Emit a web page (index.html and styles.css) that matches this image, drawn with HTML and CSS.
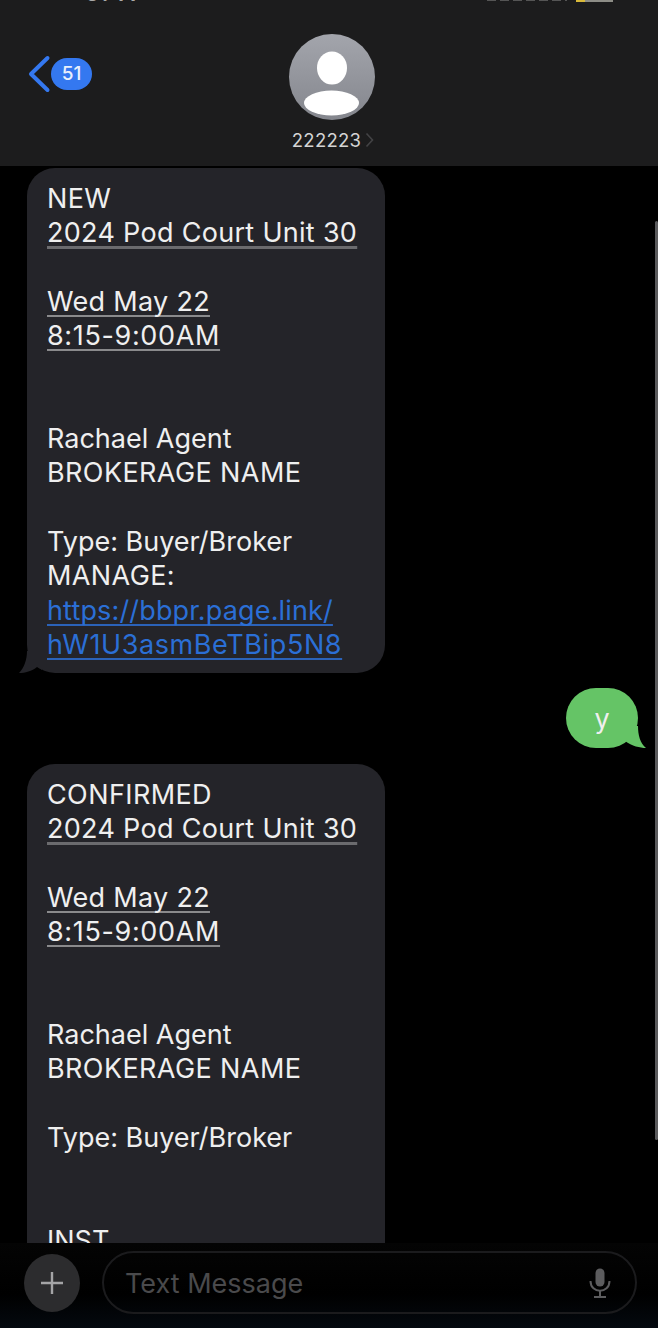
FILE: index.html
```html
<!DOCTYPE html>
<html lang="en">
<head>
<meta charset="utf-8">
<title>Messages</title>
<link rel="stylesheet" href="styles.css">
</head>
<body>
<div class="phone">
  <header class="top">
    <div class="status">
      <span class="time">9:41</span>
      <span class="signal"></span>
      <span class="battery"></span>
    </div>
    <div class="back">
      <svg class="chevron" width="24" height="38" viewBox="0 0 24 38"><path d="M20.5 3 L4 19 L20.5 35" fill="none" stroke="#3478f0" stroke-width="4" stroke-linecap="round" stroke-linejoin="round"/></svg>
      <span class="count">51</span>
    </div>
    <div class="contact">
      <svg class="avatar" width="86" height="86" viewBox="0 0 86 86">
        <defs><linearGradient id="av" x1="0" y1="0" x2="0" y2="1"><stop offset="0" stop-color="#a3a5ac"/><stop offset="1" stop-color="#84868d"/></linearGradient></defs>
        <circle cx="43" cy="43" r="43" fill="url(#av)"/>
        <ellipse cx="43" cy="34" rx="15" ry="16.5" fill="#fff"/>
        <ellipse cx="42.5" cy="69" rx="27.5" ry="12.5" fill="#fff"/>
      </svg>
      <div class="name">222223<svg class="more" width="9" height="16" viewBox="0 0 9 16"><path d="M1.5 1.5 L7.5 8 L1.5 14.5" fill="none" stroke="#434345" stroke-width="1.6"/></svg></div>
    </div>
  </header>
  <main class="thread">
    <div class="bubble in">
      <p class="line caps">NEW</p>
      <p class="line"><u class="mark thick">2024 Pod Court Unit 30</u></p>
      <p class="line">&nbsp;</p>
      <p class="line"><u class="mark">Wed May 22</u></p>
      <p class="line"><u class="mark hours">8:15-9:00AM</u></p>
      <p class="line">&nbsp;</p>
      <p class="line">&nbsp;</p>
      <p class="line">Rachael Agent</p>
      <p class="line caps">BROKERAGE NAME</p>
      <p class="line">&nbsp;</p>
      <p class="line">Type: Buyer/Broker</p>
      <p class="line caps">MANAGE:</p>
      <p class="line"><u class="link">https://bbpr.page.link/</u></p>
      <p class="line"><u class="link code">hW1U3asmBeTBip5N8</u></p>
      <svg class="tail tail-in" width="24" height="22" viewBox="0 0 24 22"><path d="M24 0 H9 C9 9 6 17 1 22 C7 22 14 20 19 16 L24 19 Z" fill="#242429"/></svg>
    </div>
    <div class="bubble out">y
      <svg class="tail tail-out" width="22" height="22" viewBox="0 0 22 22"><path d="M0 0 H14 C14 9 16 17 22 22 C16 22 8 20 1 15 L0 15 Z" fill="#65c466"/></svg>
    </div>
    <div class="bubble in cut">
      <p class="line caps">CONFIRMED</p>
      <p class="line"><u class="mark thick">2024 Pod Court Unit 30</u></p>
      <p class="line">&nbsp;</p>
      <p class="line"><u class="mark">Wed May 22</u></p>
      <p class="line"><u class="mark hours">8:15-9:00AM</u></p>
      <p class="line">&nbsp;</p>
      <p class="line">&nbsp;</p>
      <p class="line">Rachael Agent</p>
      <p class="line caps">BROKERAGE NAME</p>
      <p class="line">&nbsp;</p>
      <p class="line">Type: Buyer/Broker</p>
      <p class="line">&nbsp;</p>
      <p class="line">&nbsp;</p>
      <p class="line">INST</p>
    </div>
    <span class="scrollbar"></span>
  </main>
  <footer class="composer">
    <button class="plus"><svg width="24" height="24" viewBox="0 0 24 24"><path d="M12 1 V23 M1 12 H23" stroke="#a4a4a6" stroke-width="2.4" fill="none"/></svg></button>
    <div class="field">
      <span class="placeholder">Text Message</span>
      <svg class="mic" width="22" height="30" viewBox="0 0 22 30"><rect x="6.5" y="0.5" width="9" height="18" rx="4.5" fill="#5c5c5e"/><path d="M1.5 13 C1.5 26 20.5 26 20.5 13" fill="none" stroke="#5c5c5e" stroke-width="2"/><path d="M11 23 V28 M5 29 H17" stroke="#5c5c5e" stroke-width="2" fill="none"/></svg>
    </div>
  </footer>
</div>
</body>
</html>
```
FILE: styles.css
```css
* { box-sizing: border-box; }
html, body { margin: 0; padding: 0; background: #000; }
.phone {
  width: 658px;
  height: 1328px;
  display: flex;
  flex-direction: column;
  overflow: hidden;
  font-family: Inter, "Liberation Sans", sans-serif;
  color: #efefef;
}
.top {
  position: relative;
  height: 166px;
  flex: none;
  background: #1c1c1d;
}
.status { position: absolute; inset: 0 0 auto 0; height: 3px; overflow: hidden; }
.time { position: absolute; left: 85px; top: -17px; font-size: 24px; line-height: 20px; font-weight: 600; letter-spacing: 1px; color: #aaa; }
.signal { position: absolute; left: 487px; top: 0; width: 80px; height: 1px; background: repeating-linear-gradient(90deg, #555 0 9px, transparent 9px 13px); }
.battery { position: absolute; left: 576px; top: 0; width: 37px; height: 2px; background: linear-gradient(90deg, #d8b93a 0 9px, #8d8d86 9px); }
.back { position: absolute; left: 27px; top: 55px; display: flex; align-items: center; }
.count {
  width: 41px;
  height: 32px;
  border-radius: 16px;
  background: #3478f0;
  color: #e8effc;
  font-size: 19px;
  font-weight: 500;
  line-height: 32px;
  text-align: center;
}
.contact { position: absolute; left: 289px; top: 34px; width: 86px; display: flex; flex-direction: column; align-items: center; }
.avatar { display: block; }
.name { margin-top: 9px; font-size: 18.5px; letter-spacing: 0.25px; line-height: 22px; color: #d4d4d4; white-space: nowrap; display: flex; align-items: center; gap: 4px; padding-left: 2px; }
.thread { position: relative; flex: 1; min-height: 0; padding-top: 2px; overflow: hidden; }
.line { margin: 0; height: 34.3px; line-height: 34.3px; white-space: nowrap; }
.caps { letter-spacing: 0.4px; }
.bubble {
  position: relative;
  font-size: 27px;
  border-radius: 28px;
  background: #242429;
}
.bubble.in { margin-left: 27px; width: 358px; padding: 14px 20px 10.8px 20px; }
.bubble.out {
  margin: 15px 0 16px 566px;
  width: 72px;
  height: 60px;
  padding-top: 14px;
  line-height: 34px;
  text-align: center;
  background: #65c466;
  border-radius: 30px;
}
.bubble.cut { padding-bottom: 60px; }
.mark { letter-spacing: 0.3px; text-decoration: underline 2px #8a8a8c; text-underline-offset: 4px; text-decoration-skip-ink: none; }
.mark.thick { text-decoration-thickness: 3px; text-decoration-color: #6b6b6e; }
.mark.hours { letter-spacing: 0.65px; }
.link { letter-spacing: 0.15px; color: #2b6fd6; text-decoration: underline 2px #2b62b8; text-underline-offset: 4px; text-decoration-skip-ink: none; }
.link.code { letter-spacing: 0.6px; }
.tail { position: absolute; }
.tail-in { left: -9px; bottom: 0; }
.tail-out { right: -8px; bottom: 0; }
.scrollbar { position: absolute; right: 0; top: 55px; width: 3px; height: 919px; border-radius: 2px; background: #5a5a5c; }
.composer {
  flex: none;
  height: 85px;
  display: flex;
  align-items: flex-start;
  background: linear-gradient(180deg, #040404 0%, #000 60%, #04090f 100%);
  padding: 8px 21px 0 24px;
}
.plus {
  flex: none;
  width: 56px;
  height: 58px;
  margin-top: 3px;
  border: 0;
  padding: 0;
  border-radius: 50%;
  background: #2c2c2e;
  display: flex;
  align-items: center;
  justify-content: center;
}
.field {
  flex: 1;
  height: 63px;
  margin-left: 22px;
  border: 2px solid #1b1b1d;
  border-radius: 32px;
  display: flex;
  align-items: center;
  justify-content: space-between;
  padding: 1px 24px 0 21px;
}
.placeholder { font-size: 27px; color: #4a4a4c; }
.mic { display: block; }
```
